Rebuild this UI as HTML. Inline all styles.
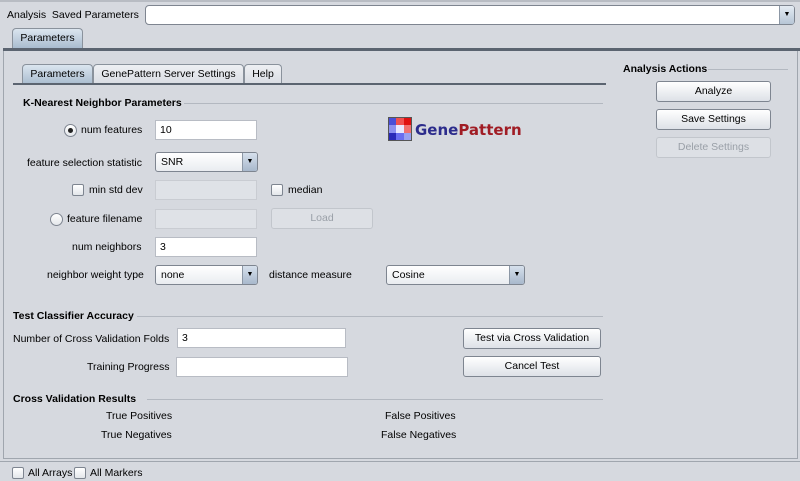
<!DOCTYPE html>
<html><head><style>
*{box-sizing:border-box}
body{margin:0;width:800px;height:481px;background:#d6d9df;font-family:"Liberation Sans",Arial,sans-serif;font-size:10.5px;color:#000;position:relative;overflow:hidden}
.a{position:absolute;white-space:nowrap}
.tf{position:absolute;background:#fff;border:1px solid #b8bcc4;height:20px;padding:0 4px;line-height:18px;font-size:10.5px}
.tf.dis{background:#dfe2e7;border-color:#c9ccd2}
.cb{position:absolute;border:1px solid #7e8590;border-radius:3px;height:20px;background:linear-gradient(#fff,#e9ecf0);padding:0 5px;line-height:18px;font-size:10.5px}
.cb .ar{position:absolute;right:0;top:0;bottom:0;width:15px;background:linear-gradient(#d6e0ec,#a8b8cc);border-left:1px solid #8c97a5;border-radius:0 2px 2px 0;font-size:7px;text-align:center;line-height:18px}
.btn{position:absolute;border:1px solid #7e8590;border-radius:3px;background:linear-gradient(#fff,#dde1e7);text-align:center;font-size:10.5px;height:21px;line-height:19px}
.btn.dis{color:#9aa0a8;border-color:#c2c6cc;background:#dde0e5}
.bold{font-weight:bold}
.line{position:absolute;height:1px;background:#b3b8c0}
.chk{position:absolute;width:12px;height:12px;border:1px solid #7e8590;border-radius:2px;background:linear-gradient(#fff,#e3e6ea)}
.rad{position:absolute;width:13px;height:13px;border:1px solid #7e8590;border-radius:50%;background:linear-gradient(#fff,#e3e6ea)}
.tab{position:absolute;border:1px solid #8a929c;border-bottom:none;border-radius:4px 4px 0 0;background:linear-gradient(#eef0f3,#d9dde3);text-align:center;height:20px;line-height:19px}
.tab.sel{background:linear-gradient(#dbe5ef,#a9bccf)}
</style></head><body>
<div class="a" style="left:0;top:0;width:800px;height:2px;background:#b8bcc3"></div>
<div class="a" style="left:7px;top:9px">Analysis&nbsp; Saved Parameters</div>
<div class="cb" style="left:145px;top:5px;width:650px;height:20px;border-radius:4px;background:#fff"><div class="ar" style="background:linear-gradient(#e4ebf3,#b7c6d6)">▼</div></div>
<div class="tab sel" style="left:12px;top:28px;width:71px">Parameters</div>
<div class="a" style="left:3px;top:48px;width:797px;height:3px;background:#5b6470"></div>
<div class="a" style="left:3px;top:51px;width:795px;height:408px;border:1px solid #a0a6ae;border-top:none"></div>
<div class="tab sel" style="left:22px;top:64px;width:71px">Parameters</div>
<div class="tab" style="left:93px;top:64px;width:151px">GenePattern Server Settings</div>
<div class="tab" style="left:244px;top:64px;width:38px">Help</div>
<div class="a" style="left:13px;top:83px;width:593px;height:2px;background:#5b6470"></div>

<div class="a bold" style="left:23px;top:97px">K-Nearest Neighbor Parameters</div>
<div class="line" style="left:184px;top:103px;width:419px"></div>

<div class="rad" style="left:64px;top:124px"><div style="position:absolute;left:3px;top:3px;width:5px;height:5px;border-radius:50%;background:#222"></div></div>
<div class="a" style="left:81px;top:124px">num features</div>
<div class="tf" style="left:155px;top:120px;width:102px">10</div>
<div class="a" style="left:388px;top:117px;width:24px;height:24px;border:1px solid #555;display:grid;grid-template-columns:repeat(3,1fr)">
<i style="background:#4a4ed8"></i><i style="background:#f05050"></i><i style="background:#e01010"></i>
<i style="background:#8c90f0"></i><i style="background:#e8e8ff"></i><i style="background:#f07070"></i>
<i style="background:#2a2ab8"></i><i style="background:#6a6ef0"></i><i style="background:#9aa0f0"></i></div>
<div class="a bold" style="left:415px;top:121px;font-size:15px;font-family:'DejaVu Sans',sans-serif"><span style="color:#2c2c8c">Gene</span><span style="color:#a01c24">Pattern</span></div>

<div class="a" style="left:27px;top:157px">feature selection statistic</div>
<div class="cb" style="left:155px;top:152px;width:103px">SNR<div class="ar">▼</div></div>

<div class="chk" style="left:72px;top:184px"></div>
<div class="a" style="left:89px;top:184px">min std dev</div>
<div class="tf dis" style="left:155px;top:180px;width:102px"></div>
<div class="chk" style="left:271px;top:184px"></div>
<div class="a" style="left:288px;top:184px">median</div>

<div class="rad" style="left:50px;top:213px"></div>
<div class="a" style="left:67px;top:213px">feature filename</div>
<div class="tf dis" style="left:155px;top:209px;width:102px"></div>
<div class="btn dis" style="left:271px;top:208px;width:102px">Load</div>

<div class="a" style="left:72px;top:241px">num neighbors</div>
<div class="tf" style="left:155px;top:237px;width:102px">3</div>

<div class="a" style="left:47px;top:269px">neighbor weight type</div>
<div class="cb" style="left:155px;top:265px;width:103px">none<div class="ar">▼</div></div>
<div class="a" style="left:269px;top:269px">distance measure</div>
<div class="cb" style="left:386px;top:265px;width:139px">Cosine<div class="ar">▼</div></div>

<div class="a bold" style="left:13px;top:310px">Test Classifier Accuracy</div>
<div class="line" style="left:137px;top:316px;width:466px"></div>
<div class="a" style="left:13px;top:333px">Number of Cross Validation Folds</div>
<div class="tf" style="left:177px;top:328px;width:169px">3</div>
<div class="btn" style="left:463px;top:328px;width:138px">Test via Cross Validation</div>
<div class="a" style="left:87px;top:361px">Training Progress</div>
<div class="tf" style="left:176px;top:357px;width:172px"></div>
<div class="btn" style="left:463px;top:356px;width:138px">Cancel Test</div>

<div class="a bold" style="left:13px;top:393px">Cross Validation Results</div>
<div class="line" style="left:147px;top:399px;width:456px"></div>
<div class="a" style="left:106px;top:410px">True Positives</div>
<div class="a" style="left:101px;top:429px">True Negatives</div>
<div class="a" style="left:385px;top:410px">False Positives</div>
<div class="a" style="left:381px;top:429px">False Negatives</div>

<div class="a bold" style="left:623px;top:63px">Analysis Actions</div>
<div class="line" style="left:708px;top:69px;width:80px"></div>
<div class="btn" style="left:656px;top:81px;width:115px">Analyze</div>
<div class="btn" style="left:656px;top:109px;width:115px">Save Settings</div>
<div class="btn dis" style="left:656px;top:137px;width:115px">Delete Settings</div>

<div class="a" style="left:0;top:461px;width:800px;height:1px;background:#a0a6ae"></div>
<div class="chk" style="left:12px;top:467px"></div>
<div class="a" style="left:28px;top:467px">All Arrays</div>
<div class="chk" style="left:74px;top:467px"></div>
<div class="a" style="left:90px;top:467px">All Markers</div>
</body></html>
